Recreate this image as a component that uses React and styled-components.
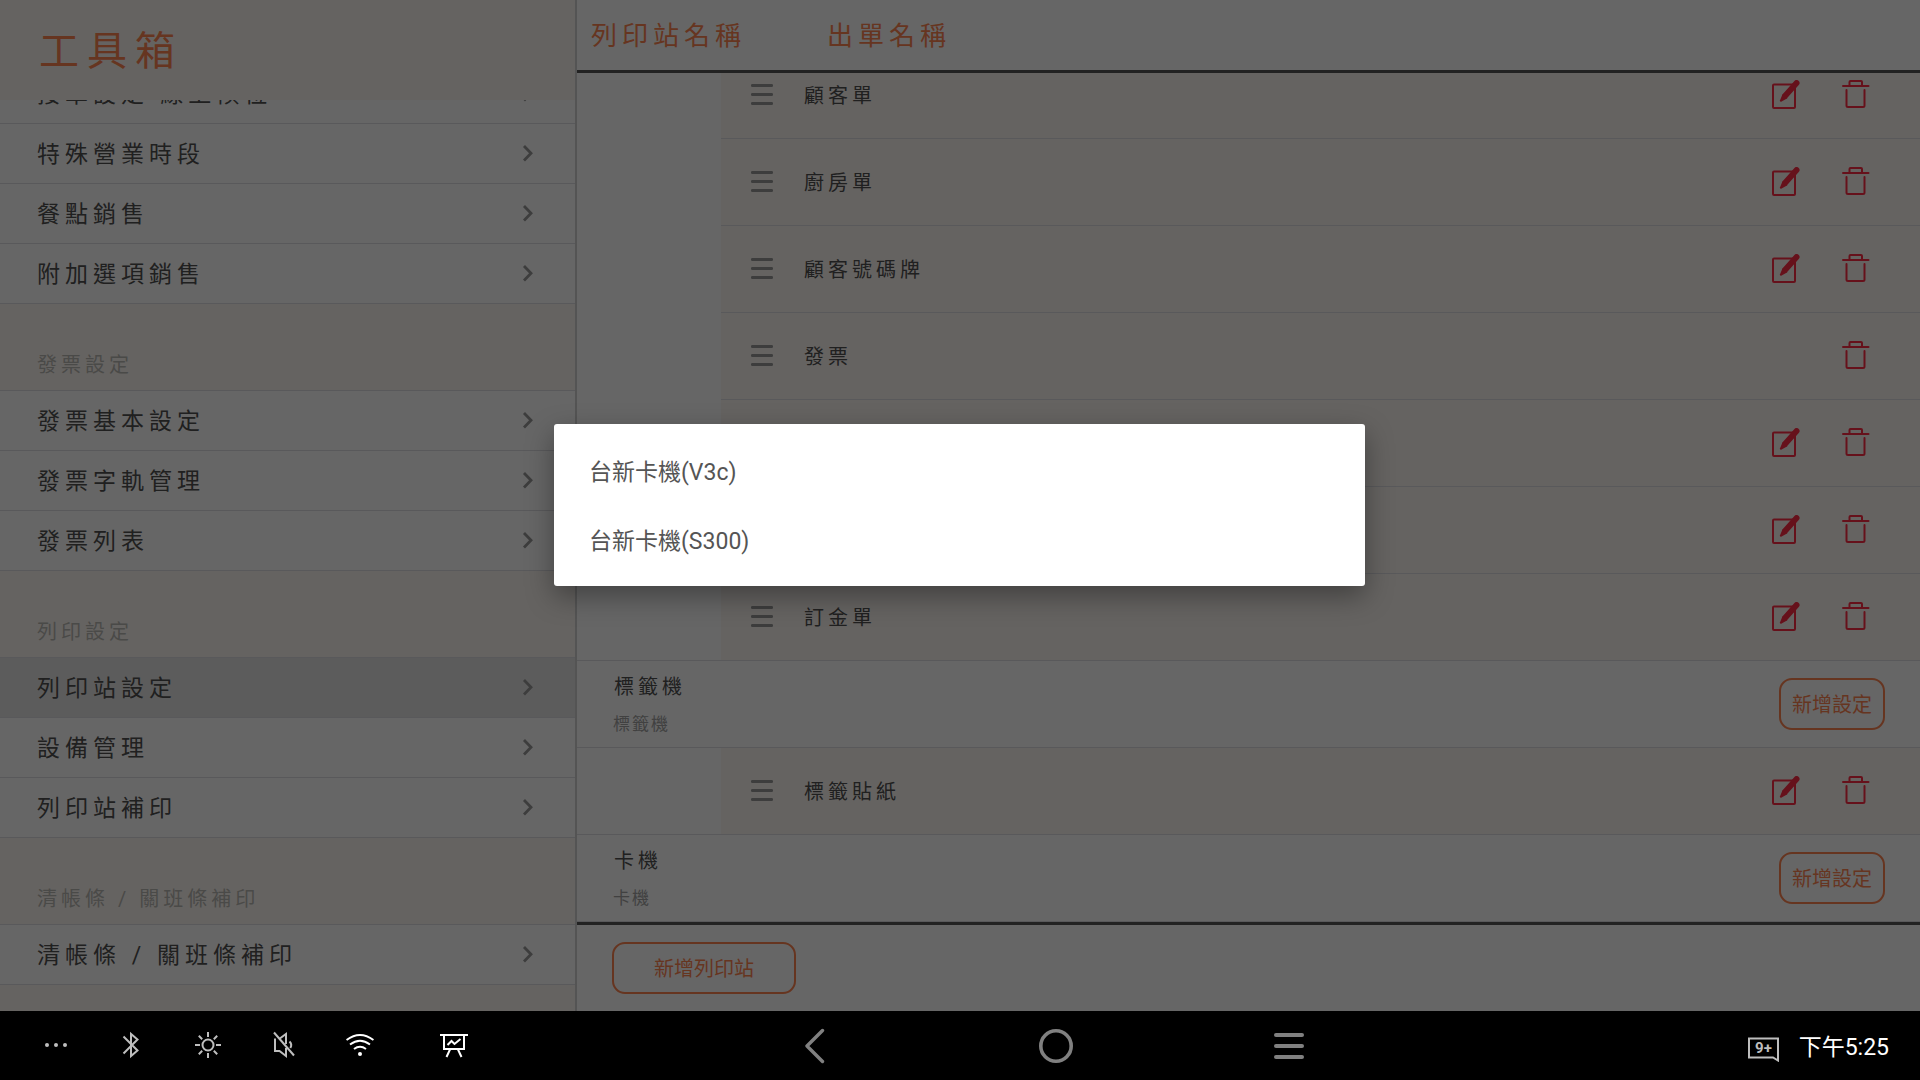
import React, { useEffect, useRef, useState } from "react";
import styled, { createGlobalStyle } from "styled-components";

const GlobalStyle = createGlobalStyle`
  * {
    box-sizing: border-box;
  }
  body {
    margin: 0;
    background: #000;
    font-family: Roboto, "Noto Sans CJK TC", sans-serif;
    color: #505050;
  }
  ul {
    list-style: none;
    margin: 0;
    padding: 0;
  }
  button {
    font-family: inherit;
    background: none;
    border: none;
    padding: 0;
    cursor: pointer;
  }
  svg {
    display: block;
  }
`;

const Screen = styled.div`
  display: flex;
  flex-direction: column;
  height: 100vh;
`;

const Main = styled.main`
  position: relative;
  display: flex;
  flex: 1;
  min-height: 0;
  background: #fff;
`;

/* sidebar */
const Sidebar = styled.aside`
  display: flex;
  flex-direction: column;
  width: calc(30% + 1px);
  border-right: 2px solid #d2d2d2;
  background: #fdf8f3;
`;

const SidebarTitle = styled.h1`
  flex: none;
  margin: 0;
  padding: 4px 39px 0;
  font-size: 40px;
  font-weight: 400;
  line-height: 96px;
  letter-spacing: 8px;
  color: #ff8552;
`;

const Scroller = styled.div`
  flex: 1;
  min-height: 0;
  overflow-y: auto;
  scrollbar-width: none;
  padding-bottom: ${(props) => props.$bottom || 0}px;
`;

const SectionTitle = styled.h2`
  margin: 0;
  height: 87px;
  padding: 45px 37px 0;
  border-bottom: 1px solid #dedee4;
  font-size: 20px;
  font-weight: 400;
  line-height: 32px;
  letter-spacing: 4px;
  color: #bab8b4;
`;

const MenuLink = styled.a`
  display: flex;
  align-items: center;
  justify-content: space-between;
  height: 60px;
  padding: 0 41px 0 37px;
  border-bottom: 1px solid #dedee4;
  background: ${(props) => (props.$active ? "#e6e6e6" : "#fff")};
  font-size: 23px;
  line-height: 32px;
  letter-spacing: 5px;
  color: #505050;
  text-decoration: none;
`;

const MenuLabel = styled.span`
  padding-top: 2px;
`;

/* print stations */
const Content = styled.section`
  display: flex;
  flex-direction: column;
  flex: 1;
  min-width: 0;
`;

const ColumnHeads = styled.div`
  display: flex;
  flex: none;
  padding: 2px 0 0 14px;
  border-bottom: 3px solid #555;
  font-size: 26px;
  line-height: 68px;
  letter-spacing: 5px;
  color: #ff8552;
`;

const ColumnHead = styled.span`
  width: 236px;
`;

const StationHead = styled.div`
  display: flex;
  align-items: center;
  justify-content: space-between;
  height: 87px;
  padding: 0 35px 0 36px;
  border-bottom: 1px solid #dedee4;
`;

const StationName = styled.div`
  padding: 1px 0 0 1px;
  font-size: 20px;
  line-height: 32px;
  letter-spacing: 4px;
`;

const StationType = styled.div`
  padding-top: 7px;
  font-size: 17px;
  line-height: 28px;
  letter-spacing: 2px;
  color: #a2a2a2;
`;

const TicketList = styled.ul`
  && {
    padding-left: 144px;
    border-bottom: 1px solid #dedee4;
  }
`;

const Ticket = styled.li`
  display: flex;
  align-items: center;
  height: 87px;
  padding: 0 50px 0 30px;
  border-bottom: 1px solid #dedee4;
  background: #fdf8f3;
  font-size: 20px;
  line-height: 32px;
  letter-spacing: 4px;

  &:last-child {
    height: 86px;
    border-bottom: none;
  }
`;

const TicketName = styled.span`
  flex: 1;
  padding: 2px 0 0 31px;
`;

const Actions = styled.div`
  display: flex;
  gap: 42px;
`;

const OutlineButton = styled.button`
  height: 52px;
  padding: 2px ${(props) => (props.$wide ? 40 : 11)}px 0;
  border: 2px solid #ff8552;
  border-radius: 13px;
  font-size: 20px;
  line-height: 32px;
  color: #ff8552;
`;

const Footer = styled.footer`
  display: flex;
  align-items: center;
  flex: none;
  height: 89px;
  padding-left: 35px;
  border-top: 3px solid #555;
`;

/* card reader dialog */
const Overlay = styled.div`
  position: absolute;
  inset: 0;
  display: flex;
  align-items: center;
  justify-content: center;
  padding: 0 1px 1px 0;
  background: rgba(0, 0, 0, 0.6);
`;

const Dialog = styled.div`
  display: flex;
  flex-direction: column;
  width: 811px;
  max-width: 90%;
  padding: 12px 0;
  border-radius: 3px;
  background: #fff;
  box-shadow: 0 10px 28px rgba(0, 0, 0, 0.36);
`;

const DialogOption = styled.button`
  height: 69px;
  padding: 4px 35px 0;
  font-size: 23px;
  line-height: 32px;
  text-align: left;
  color: #555;
`;

/* system bar */
const SystemBar = styled.nav`
  display: grid;
  grid-template-columns: calc(42% - 1px) auto 1fr;
  align-items: center;
  flex: none;
  height: 69px;
  background: #000;
`;

const StatusIcons = styled.div`
  display: flex;
  gap: 48px;
  padding: 0 0 1px 42px;
  color: #bebebe;
`;

const StatusButton = styled.button`
  color: ${(props) => (props.$on ? "#fff" : "inherit")};
  margin-left: ${(props) => (props.$apart ? 18 : 0)}px;
`;

const NavButtons = styled.div`
  display: flex;
  gap: 201px;
  color: #808080;
`;

const NavButton = styled.button`
  min-width: 33px;
  color: inherit;
`;

const Clock = styled.div`
  display: flex;
  align-items: center;
  justify-content: flex-end;
  gap: 19px;
  padding: 4px 31px 0 0;
  font-size: 23px;
  line-height: 32px;
  color: #fff;
`;

const ChevronIcon = () => (
  <svg width="12" height="19" viewBox="0 0 12 19" fill="none" stroke="#999" strokeWidth="2.8">
    <path d="M2 2l7 7.200-7 7.200" />
  </svg>
);

const DragIcon = () => (
  <svg width="22" height="22" viewBox="0 0 22 22" fill="#999">
    <rect width="22" height="3" rx="1.2" />
    <rect y="9" width="22" height="3" rx="1.2" />
    <rect y="18" width="22" height="3" rx="1.2" />
  </svg>
);

const EditIcon = () => (
  <svg width="28" height="30" viewBox="0 0 28 30" fill="none" stroke="#ff2c44">
    <rect x="1" y="4.5" width="22" height="23.5" rx="1" strokeWidth="2" />
    <path d="M24.600 3L13 16" strokeWidth="5.800" strokeLinecap="round" />
    <path d="M10.600 14.200l4.800 4-6.200 3.500q-1.600.3-1.200-1.400z" fill="#ff2c44" stroke="none" />
  </svg>
);

const TrashIcon = () => (
  <svg width="28" height="30" viewBox="0 0 28 30" fill="none" stroke="#ff2c44" strokeWidth="2" strokeLinecap="round">
    <path d="M1 6h25.500" />
    <path d="M7.500 5.500V2q0-1 1-1h10.500q1 0 1 1v3.500" />
    <path d="M4.500 10v15.500q0 1.500 1.500 1.500h15q1.500 0 1.500-1.500V10" />
  </svg>
);

const MoreIcon = () => (
  <svg width="28" height="28" viewBox="0 0 28 28" fill="currentColor">
    <circle cx="5" cy="14" r="2" />
    <circle cx="14" cy="14" r="2" />
    <circle cx="23" cy="14" r="2" />
  </svg>
);

const BluetoothIcon = () => (
  <svg width="28" height="28" viewBox="0 0 28 28" fill="none" stroke="currentColor" strokeWidth="2">
    <path d="M5.500 5.500l14 14-6.500 5.500V3l6.500 5.500-14 14" />
  </svg>
);

const BrightnessIcon = () => (
  <svg width="28" height="28" viewBox="0 0 28 28" fill="none" stroke="currentColor" strokeWidth="2">
    <circle cx="14" cy="14" r="5.500" />
    <path d="M14 1v5M14 22v5M1 14h5M22 14h5M4.800 4.800l3.400 3.400M19.800 19.800l3.400 3.400M4.800 23.200l3.400-3.400M19.800 8.200l3.400-3.400" />
  </svg>
);

const MutedIcon = () => (
  <svg width="28" height="28" viewBox="0 0 28 28" fill="none" stroke="currentColor" strokeWidth="2">
    <path d="M4 1.500L24 24.500" />
    <path d="M5 7.500V20h4.500l6.500 5V17" />
    <path d="M9.800 7.500L16 3v10" />
    <path d="M19.500 10.500q3 3 .8 6.500" />
  </svg>
);

const WifiIcon = () => (
  <svg width="28" height="28" viewBox="0 0 28 28" fill="none" stroke="currentColor" strokeWidth="2">
    <path d="M.500 9q13.500-10 27 0" />
    <path d="M4 13.500q10-7.500 20 0" />
    <path d="M8 18q6-4.500 12 0" />
    <circle cx="14" cy="23" r="2" fill="currentColor" stroke="none" />
  </svg>
);

const BoardIcon = () => (
  <svg width="28" height="28" viewBox="0 0 28 28" fill="none" stroke="currentColor" strokeWidth="2">
    <path d="M0 4h28M4 4v14h20V4M10 18.500L6.500 26M18 18.500l3.500 7.500" />
    <path d="M7.500 14l4-4 3 3 6-5" />
  </svg>
);

const BackIcon = () => (
  <svg width="20" height="36" viewBox="0 0 20 36" fill="none" stroke="currentColor" strokeWidth="3.400" strokeLinecap="round" strokeLinejoin="round">
    <path d="M17.500 2.500L2 18l15.500 15.500" />
  </svg>
);

const HomeIcon = () => (
  <svg width="34" height="36" viewBox="0 0 34 36" fill="none" stroke="currentColor" strokeWidth="3.600">
    <circle cx="17" cy="18" r="15.200" />
  </svg>
);

const RecentIcon = () => (
  <svg width="30" height="36" viewBox="0 0 30 36" fill="currentColor">
    <rect y="5" width="30" height="4" rx="2" />
    <rect y="16" width="30" height="4" rx="2" />
    <rect y="27" width="30" height="4" rx="2" />
  </svg>
);

const NoticeIcon = () => (
  <svg width="32" height="28" viewBox="0 0 32 28" fill="none" stroke="#bebebe" strokeWidth="2">
    <path d="M1 4.500h29v22l-5-3H1z" />
    <text x="15.500" y="19" fill="#bebebe" stroke="none" fontSize="15" fontWeight="700" textAnchor="middle">
      9+
    </text>
  </svg>
);

const menu = [
  { items: ["接單設定-線上候位", "特殊營業時段", "餐點銷售", "附加選項銷售"] },
  { title: "發票設定", items: ["發票基本設定", "發票字軌管理", "發票列表"] },
  { title: "列印設定", items: ["列印站設定", "設備管理", "列印站補印"] },
  { title: "清帳條 / 關班條補印", items: ["清帳條 / 關班條補印"] },
];

const stations = [
  {
    tickets: [
      { name: "顧客單", editable: true },
      { name: "廚房單", editable: true },
      { name: "顧客號碼牌", editable: true },
      { name: "發票", editable: false },
      { name: "交班單", editable: true },
      { name: "外送單", editable: true },
      { name: "訂金單", editable: true },
    ],
  },
  { name: "標籤機", tickets: [{ name: "標籤貼紙", editable: true }] },
  { name: "卡機", tickets: [] },
];

const readers = ["台新卡機(V3c)", "台新卡機(S300)"];

const App = () => {
  const [active, setActive] = useState("列印站設定");
  const [open, setOpen] = useState(true);
  const menuRef = useRef(null);
  const stationRef = useRef(null);

  // both lists open at their last entry
  useEffect(() => {
    menuRef.current.scrollTop = menuRef.current.scrollHeight;
    stationRef.current.scrollTop = stationRef.current.scrollHeight;
  }, []);

  return (
    <Screen>
      <GlobalStyle />
      <Main>
        <Sidebar>
          <SidebarTitle>工具箱</SidebarTitle>
          <Scroller ref={menuRef} $bottom={26}>
            {menu.map((section, index) => (
              <div key={index}>
                {section.title && <SectionTitle>{section.title}</SectionTitle>}
                {section.items.map((item) => (
                  <MenuLink key={item} href="#" $active={item === active} onClick={() => setActive(item)}>
                    <MenuLabel>{item}</MenuLabel>
                    <ChevronIcon />
                  </MenuLink>
                ))}
              </div>
            ))}
          </Scroller>
        </Sidebar>

        <Content>
          <ColumnHeads>
            <ColumnHead>列印站名稱</ColumnHead>
            <ColumnHead>出單名稱</ColumnHead>
          </ColumnHeads>
          <Scroller ref={stationRef}>
            {stations.map((station, index) => (
              <div key={index}>
                {station.name && (
                  <StationHead>
                    <div>
                      <StationName>{station.name}</StationName>
                      <StationType>{station.name}</StationType>
                    </div>
                    <OutlineButton onClick={() => setOpen(true)}>新增設定</OutlineButton>
                  </StationHead>
                )}
                {station.tickets.length > 0 && (
                  <TicketList>
                    {station.tickets.map((ticket) => (
                      <Ticket key={ticket.name}>
                        <DragIcon />
                        <TicketName>{ticket.name}</TicketName>
                        <Actions>
                          {ticket.editable && (
                            <button aria-label="編輯">
                              <EditIcon />
                            </button>
                          )}
                          <button aria-label="刪除">
                            <TrashIcon />
                          </button>
                        </Actions>
                      </Ticket>
                    ))}
                  </TicketList>
                )}
              </div>
            ))}
          </Scroller>
          <Footer>
            <OutlineButton $wide>新增列印站</OutlineButton>
          </Footer>
        </Content>

        {open && (
          <Overlay onClick={() => setOpen(false)}>
            <Dialog role="dialog">
              {readers.map((reader) => (
                <DialogOption key={reader}>{reader}</DialogOption>
              ))}
            </Dialog>
          </Overlay>
        )}
      </Main>

      <SystemBar>
        <StatusIcons>
          <StatusButton aria-label="更多"><MoreIcon /></StatusButton>
          <StatusButton aria-label="藍牙"><BluetoothIcon /></StatusButton>
          <StatusButton aria-label="亮度"><BrightnessIcon /></StatusButton>
          <StatusButton aria-label="靜音"><MutedIcon /></StatusButton>
          <StatusButton aria-label="無線網路" $on><WifiIcon /></StatusButton>
          <StatusButton aria-label="看板" $on $apart><BoardIcon /></StatusButton>
        </StatusIcons>
        <NavButtons>
          <NavButton aria-label="返回"><BackIcon /></NavButton>
          <NavButton aria-label="主畫面"><HomeIcon /></NavButton>
          <NavButton aria-label="最近使用"><RecentIcon /></NavButton>
        </NavButtons>
        <Clock>
          <NoticeIcon />
          <span>下午5:25</span>
        </Clock>
      </SystemBar>
    </Screen>
  );
};

export default App;
